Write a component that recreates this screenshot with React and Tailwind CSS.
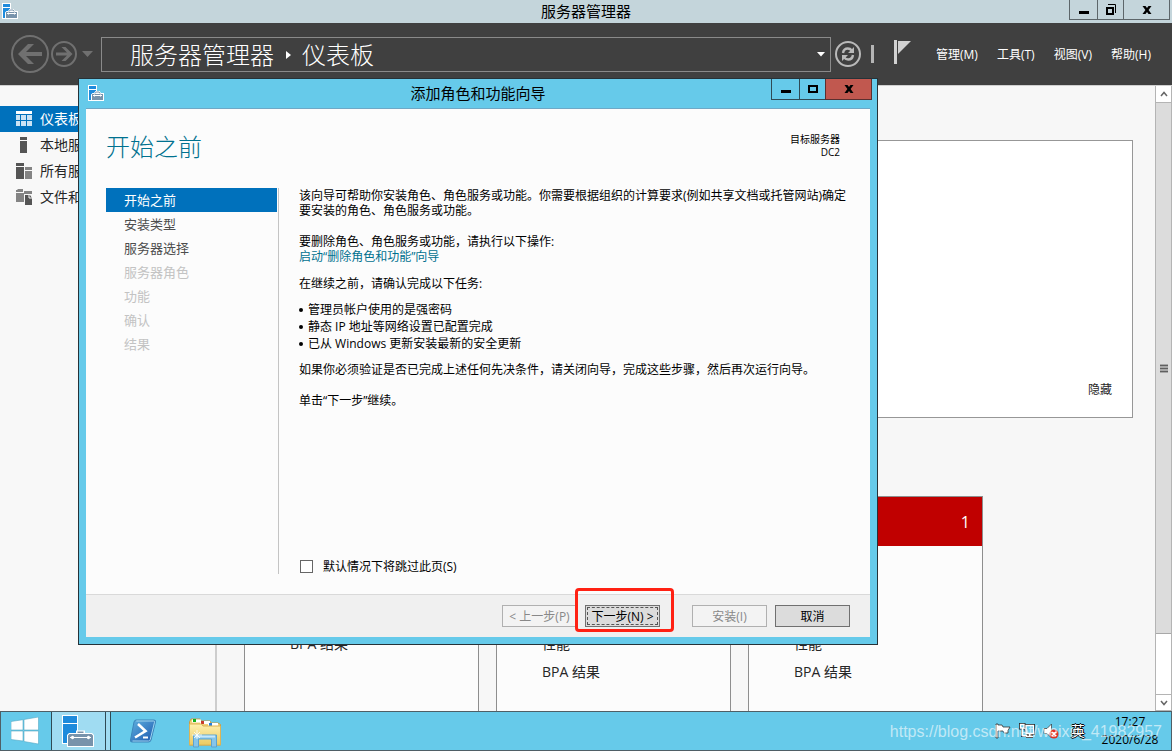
import React, { useState } from "react";

const steps = [
  { label: "开始之前", state: "active" },
  { label: "安装类型", state: "enabled" },
  { label: "服务器选择", state: "enabled" },
  { label: "服务器角色", state: "disabled" },
  { label: "功能", state: "disabled" },
  { label: "确认", state: "disabled" },
  { label: "结果", state: "disabled" },
];

const tasks = [
  "管理员帐户使用的是强密码",
  "静态 IP 地址等网络设置已配置完成",
  "已从 Windows 更新安装最新的安全更新",
];

const menus = ["管理(M)", "工具(T)", "视图(V)", "帮助(H)"];

const tiles = [
  { rows: ["BPA 结果"] },
  { rows: ["性能", "BPA 结果"] },
  { rows: ["性能", "BPA 结果"], count: 1 },
];

const ServerIcon = () => (
  <svg width="16" height="16" viewBox="0 0 16 16" className="shrink-0">
    <path d="M0 0h9v16H0z" fill="#fff" />
    <path d="M1 1h7v3H1zM1 5h7v10H1z" fill="#1e8bdc" />
    <path d="M3 9.5 4.500 8H6l1.500-2h4L13 8h3v8H3z" fill="#fff" />
    <path d="M4 9h11v6H4z" fill="#7893ab" />
    <path d="M7 8.500 8.200 7h2.800l1.200 1.500" fill="none" stroke="#7893ab" />
    <path d="M5 10.500h9M6.500 9.500v2M12.500 9.500v2" stroke="#fff" fill="none" />
  </svg>
);

const MinIcon = () => (
  <svg width="12" height="12" viewBox="0 0 12 12">
    <path d="M1 7h10v3H1z" fill="#000" />
  </svg>
);

const MaxIcon = () => (
  <svg width="12" height="12" viewBox="0 0 12 12">
    <path d="M2 3h8v6H2z" fill="none" stroke="#000" strokeWidth="2" />
  </svg>
);

const RestoreIcon = () => (
  <svg width="12" height="12" viewBox="0 0 12 12">
    <path d="M2 4h6v6H2z" fill="none" stroke="#000" strokeWidth="2" />
    <path d="M3 .500h7.500V9" fill="none" stroke="#000" />
  </svg>
);

const CloseIcon = () => (
  <svg width="12" height="12" viewBox="0 0 12 12">
    <path
      d="M1.500 2h3L6 4l1.500-2h3L7.600 6l2.900 4h-3L6 8l-1.500 2h-3l2.900-4z"
      fill="#000"
    />
  </svg>
);

const BackIcon = () => (
  <svg width="38" height="38" viewBox="0 0 38 38">
    <circle cx="19" cy="19" r="18" fill="none" stroke="#707070" strokeWidth="2" />
    <path d="M7 19 17 9h6l-8 8h16v4H15l8 8h-6z" fill="#707070" />
  </svg>
);

const ForwardIcon = () => (
  <svg width="26" height="26" viewBox="0 0 26 26">
    <circle cx="13" cy="13" r="12" fill="none" stroke="#707070" strokeWidth="2" />
    <path d="M21.500 13 14.500 6H10.500l5.500 5.500H5v3h11L10.500 20h4z" fill="#707070" />
  </svg>
);

const RefreshIcon = () => (
  <svg width="26" height="26" viewBox="0 0 26 26">
    <circle cx="13" cy="13" r="12" fill="none" stroke="#b9b9b9" strokeWidth="2" />
    <g fill="none" stroke="#b9b9b9" strokeWidth="2.400">
      <path d="M8 12c.5-3.200 2.600-4.500 4.800-4.500 1.800 0 3 .7 4 2" />
      <path d="M18 14c-.5 3.200-2.600 4.500-4.800 4.500-1.800 0-3-.7-4-2" />
    </g>
    <path d="M19 6v6h-6zM7 20v-6h6z" fill="#b9b9b9" />
  </svg>
);

const FlagIcon = () => (
  <svg width="18" height="24" viewBox="0 0 18 24">
    <path d="M0 0h3v24H0z" fill="#d2d2d2" />
    <path d="M4 1h13L7 11l-3 3z" fill="#d2d2d2" />
  </svg>
);

const DashboardIcon = () => (
  <svg width="16" height="16" viewBox="0 0 16 16">
    <path d="M0 0h16v3H0z" fill="#fff" />
    <path
      d="M0 4h4v5H0zM5 4h5v5H5zM11 4h5v5h-5zM0 10h4v5H0zM5 10h5v5H5zM11 10h5v5h-5z"
      fill="#cbe3f4"
    />
  </svg>
);

const LocalIcon = () => (
  <svg width="16" height="16" viewBox="0 0 16 16">
    <path d="M4 0h7v3H4zM4 4h7v12H4z" fill="#555" />
  </svg>
);

const AllIcon = () => (
  <svg width="16" height="16" viewBox="0 0 16 16">
    <path d="M0 0h8v3H0zM0 4h8v12H0z" fill="#555" />
    <path d="M9 4h7v3H9zM9 8h7v8H9z" fill="#848484" />
  </svg>
);

const FilesIcon = () => (
  <svg width="16" height="16" viewBox="0 0 16 16">
    <path d="M0 1h1l1-1h5v3H0zM0 4h8v9H0zM8 2h8v3H8z" fill="#848484" />
    <path d="M9 6h5l2 3v7H9z" fill="#555" />
    <path d="M13 6v3h3" fill="none" stroke="#f8f8f8" />
  </svg>
);

const sideItems = [
  { label: "仪表板", icon: <DashboardIcon />, active: true },
  { label: "本地服务器", icon: <LocalIcon /> },
  { label: "所有服务器", icon: <AllIcon /> },
  { label: "文件和存储服务", icon: <FilesIcon /> },
];

const Toolbar = () => (
  <header className="flex h-[62px] shrink-0 items-center bg-[#404040] pr-[21px] pl-[11px] text-white">
    <button aria-label="后退">
      <BackIcon />
    </button>
    <button aria-label="前进" className="ml-[2px]">
      <ForwardIcon />
    </button>
    <button aria-label="历史记录" className="ml-[5px] mr-2">
      <svg width="11" height="6" viewBox="0 0 11 6">
        <path d="M0 0h11L5.500 6z" fill="#707070" />
      </svg>
    </button>
    <div className="flex h-[35px] flex-1 items-center border border-[#8a8a8a] pt-px pr-[5px] pl-7 text-2xl font-light">
      <span>服务器管理器</span>
      <svg width="28" height="10" viewBox="0 0 28 10">
        <path d="M12 1v8l5-4z" fill="#fff" />
      </svg>
      <span>仪表板</span>
      <button aria-label="展开" className="ml-auto">
        <svg width="8" height="5" viewBox="0 0 8 5">
          <path d="M0 0h8L4 4.500z" fill="#fff" />
        </svg>
      </button>
    </div>
    <button aria-label="刷新" className="ml-1">
      <RefreshIcon />
    </button>
    <div className="ml-[10px] h-[18px] w-[3px] bg-[#b5b5b5]"></div>
    <button aria-label="通知" className="ml-5 mb-1">
      <FlagIcon />
    </button>
    <nav className="ml-6 flex w-[215px] justify-between pt-[2px] text-xs">
      {menus.map((m) => (
        <button key={m} className="whitespace-nowrap">
          {m}
        </button>
      ))}
    </nav>
  </header>
);

const Sidebar = () => (
  <nav className="w-[217px] shrink-0 border-r-2 border-[#cdcdcd] bg-[#f8f8f8] pt-5 text-sm">
    {sideItems.map((item) => (
      <a
        key={item.label}
        href="#"
        className={
          "flex h-[26px] items-center gap-2 pl-4 " +
          (item.active ? "bg-[#0071bc] text-white" : "text-[#262626]")
        }
      >
        {item.icon}
        {item.label}
      </a>
    ))}
  </nav>
);

const Scrollbar = () => (
  <div className="flex w-[17px] shrink-0 flex-col border-x border-[#b4b4b4] bg-white">
    <div className="flex h-[17px] items-center justify-center border-b border-[#b4b4b4]">
      <svg width="8" height="6" viewBox="0 0 8 6">
        <path d="M1 5l3-3.500L7 5" fill="none" stroke="#666" strokeWidth="1.500" />
      </svg>
    </div>
    <div className="flex grow-[531] basis-0 items-center justify-center border-b border-[#a8a8a8] bg-[#dcdcdc]">
      <svg width="8" height="9" viewBox="0 0 8 9">
        <path d="M0 0h8v9H0z" fill="#a8a8a8" />
        <path d="M0 1.500h8M0 4.500h8M0 7.500h8" stroke="#606060" />
      </svg>
    </div>
    <div className="grow-[60] basis-0"></div>
    <div className="flex h-[17px] items-center justify-center border-y border-[#b4b4b4]">
      <svg width="8" height="6" viewBox="0 0 8 6">
        <path d="M1 1l3 3.500L7 1" fill="none" stroke="#666" strokeWidth="1.500" />
      </svg>
    </div>
  </div>
);

const Dashboard = () => (
  <main className="min-w-0 flex-1 overflow-hidden bg-[#f7f7f7] pt-[54px] pr-[22px] pl-[27px] text-[#262626]">
    <section className="flex h-[278px] items-end justify-end border border-[#979797] bg-white px-5 pb-[19px]">
      <button className="text-xs">隐藏</button>
    </section>
    <div className="mt-[78px] flex gap-[17px]">
      {tiles.map((tile, i) => (
        <section
          key={i}
          className="h-[240px] w-[235px] shrink-0 border border-[#8e8e8e] bg-[#fcfcfc]"
        >
          <div
            className={
              "flex h-[49px] items-center justify-end pr-3 text-base text-white " +
              (tile.count ? "bg-[#c00000]" : "bg-[#fcfcfc]")
            }
          >
            {tile.count}
          </div>
          <ul className="pt-[84px] pl-[45px] text-sm">
            {tile.rows.map((r) => (
              <li key={r} className="h-7 leading-7">
                {r}
              </li>
            ))}
          </ul>
        </section>
      ))}
    </div>
  </main>
);

const Wizard = () => {
  const [skip, setSkip] = useState(false);

  return (
    <div
      role="dialog"
      aria-labelledby="wizard-title"
      className="absolute top-[78px] left-[78px] flex h-[567px] w-[800px] flex-col border border-[#263238] bg-[#66caea] px-[7px] pb-[7px] text-black"
    >
      <div className="grid h-[30px] shrink-0 grid-cols-[1fr_auto_1fr] border-b border-[#6fa8c6]">
        <div className="pt-[6px] pl-[2px]">
          <ServerIcon />
        </div>
        <h2 id="wizard-title" className="text-[15px] leading-7">
          添加角色和功能向导
        </h2>
        <div className="-mr-[2px] flex h-[21px] justify-end">
          <button
            aria-label="最小化"
            className="flex w-[29px] items-center justify-center border-x border-b border-[#2f4a55]"
          >
            <MinIcon />
          </button>
          <button
            aria-label="最大化"
            className="flex w-[25px] items-center justify-center border-b border-[#2f4a55]"
          >
            <MaxIcon />
          </button>
          <button
            aria-label="关闭"
            className="flex w-[47px] items-center justify-center border-x border-b border-[#5a3030] bg-[#c1584f]"
          >
            <CloseIcon />
          </button>
        </div>
      </div>

      <div className="flex flex-1 flex-col bg-[#fcfcfc]">
        <div className="flex h-[79px] items-start justify-between pt-6 pr-[30px] pl-5">
          <h1 className="text-2xl leading-7 font-light text-[#00718f]">
            开始之前
          </h1>
          <p className="text-right text-[10px] leading-[13px]">
            目标服务器
            <br />
            DC2
          </p>
        </div>

        <div className="flex flex-1 pb-5 pl-5">
          <ol className="w-[173px] shrink-0 border-r border-[#c4c4c4] pr-[1px] text-[13px]">
            {steps.map((s) => (
              <li
                key={s.label}
                className={
                  "h-6 pl-[18px] leading-6 " +
                  (s.state === "active"
                    ? "bg-[#0071bc] text-white"
                    : s.state === "enabled"
                      ? "text-[#4d4d4d]"
                      : "text-[#c3c3c3]")
                }
              >
                {s.label}
              </li>
            ))}
          </ol>
          <div className="flex flex-1 flex-col pr-5 pl-5 text-xs leading-[15px]">
            <p>
              该向导可帮助你安装角色、角色服务或功能。你需要根据组织的计算要求(例如共享文档或托管网站)确定要安装的角色、角色服务或功能。
            </p>
            <p className="mt-4">要删除角色、角色服务或功能，请执行以下操作:</p>
            <p>
              <a href="#" className="text-[#00718f]">
                启动“删除角色和功能”向导
              </a>
            </p>
            <p className="mt-3">在继续之前，请确认完成以下任务:</p>
            <ul className="mt-[10px] leading-[17px]">
              {tasks.map((t) => (
                <li key={t} className="flex items-center gap-[5px]">
                  <span className="size-1 rounded-full bg-black"></span>
                  {t}
                </li>
              ))}
            </ul>
            <p className="mt-[10px]">
              如果你必须验证是否已完成上述任何先决条件，请关闭向导，完成这些步骤，然后再次运行向导。
            </p>
            <p className="mt-4">单击“下一步”继续。</p>
            <label className="mt-auto flex items-center gap-[10px]">
              <input
                type="checkbox"
                checked={skip}
                onChange={(e) => setSkip(e.target.checked)}
                className="ml-px size-[13px] appearance-none border border-[#666] bg-white checked:bg-[#666]"
              />
              默认情况下将跳过此页(S)
            </label>
          </div>
        </div>

        <footer className="flex h-[43px] shrink-0 items-center justify-end border-t border-[#d9d9d9] bg-[#f0f0f0] pr-5 text-xs">
          <button
            disabled
            className="h-[22px] w-[75px] border border-[#b0b0b0] bg-[#f3f3f3] pt-px whitespace-nowrap text-[#888]"
          >
            &lt; 上一步(P)
          </button>
          <div className="relative ml-2">
            <button className="h-[22px] w-[75px] border border-[#707070] bg-[#dcdcdc] p-px">
              <span className="flex h-full items-center justify-center border border-dashed border-[#555] pt-px whitespace-nowrap">
                下一步(N) &gt;
              </span>
            </button>
            {/* highlight frame round the next button */}
            <div className="pointer-events-none absolute -top-[17px] -left-[10px] h-11 w-[99px] rounded border-3 border-[#ff2113]"></div>
          </div>
          <button
            disabled
            className="ml-8 h-[22px] w-[75px] border border-[#b0b0b0] bg-[#f3f3f3] pt-px text-[#888]"
          >
            安装(I)
          </button>
          <button className="ml-2 h-[22px] w-[75px] border border-[#707070] bg-[#dcdcdc] pt-px">
            取消
          </button>
        </footer>
      </div>
    </div>
  );
};

const StartIcon = () => (
  <svg width="28" height="28" viewBox="0 0 28 28">
    <path
      d="M0 4.500 12 2.700V13H0zM13 2.500 27.500 0v13H13zM0 14h12v10L0 22.500zM13 14h14.500v13L13 24.500z"
      fill="#fff"
      stroke="#58a9c4"
      strokeWidth=".6"
    />
  </svg>
);

const TaskServerIcon = () => (
  <svg width="33" height="33" viewBox="0 0 33 33">
    <path d="M0 0h16v29H0z" fill="#fff" />
    <path d="M1 1h14v7H1zM1 9h14v19H1z" fill="#1e8bdc" />
    <path d="M14 18v-2.500h9V18h7l2 2v12H5V20l2-2z" fill="#fff" />
    <path d="M15.500 18v-1.500h6V18zM7.500 19h22l1.500 1.500V31H6V20.500z" fill="#7893ab" />
    <path
      d="M8 22.500h21M11 21v3M26 21v3M8.500 22.500 11 21v3zM28.500 22.500 26 21v3z"
      stroke="#fff"
      strokeWidth="1"
      fill="#fff"
    />
  </svg>
);

const PowerShellIcon = () => (
  <svg width="28" height="24" viewBox="0 0 28 24">
    <defs>
      <linearGradient id="ps" x1="0" y1="0" x2="1" y2="1">
        <stop offset="0" stopColor="#5fb2e0" />
        <stop offset="1" stopColor="#1c55ad" />
      </linearGradient>
    </defs>
    <path
      d="M7 1h18q2 0 1.500 2L22 21q-.5 2-2.500 2H3q-2 0-1.500-2L5 3q.5-2 2-2z"
      fill="url(#ps)"
      stroke="#3c86bb"
    />
    <path
      d="M7.300 2h17.200q1.300 0 1 1.300L21.200 20.700q-.3 1.300-1.600 1.300H3.500"
      fill="none"
      stroke="#9fd6f0"
    />
    <path
      d="m9 5 7.500 7L6 18.500"
      fill="none"
      stroke="#fff"
      strokeWidth="2.600"
    />
    <path d="M14 18.500h5" stroke="#fff" strokeWidth="2" />
  </svg>
);

const ExplorerIcon = () => (
  <svg width="32" height="30" viewBox="0 0 32 30">
    <defs>
      <linearGradient id="folder" x1="0" y1="0" x2="0" y2="1">
        <stop offset="0" stopColor="#fdf0b0" />
        <stop offset="1" stopColor="#ecca62" />
      </linearGradient>
    </defs>
    <path
      d="M.5 27V4l1.500-3h9l1 2h9l1 2h7l2.500 1.500V27z"
      fill="#f0d27c"
      stroke="#c99c45"
    />
    <path d="M3 1.500h9v3H3z" fill="#fff" />
    <path d="M4 1h3v3H4z" fill="#12b31a" />
    <path d="M11 3h10v3H11z" fill="#fff" />
    <path d="M12 3h3v3h-3z" fill="#c83a2a" />
    <path d="M19 5h10v3H19z" fill="#fff" />
    <path d="M20 5h3v3h-3z" fill="#2380e0" />
    <path d="M.5 27V6h12l1.500 2h17.500v19z" fill="url(#folder)" stroke="#dcb456" />
    <path
      d="M4.500 29V17h23v12h-5v-8h-13v8z"
      fill="#86c5ea"
      stroke="#5ba3d0"
    />
    <path d="M6 18.500h20" stroke="#c8e8fa" strokeWidth="2" />
    <path d="M8 12v9M3 17h10M5 14l6 6M11 14l-6 6" stroke="#fff" strokeWidth=".8" />
  </svg>
);

const Tray = () => (
  <div className="ml-auto flex items-center gap-2">
    <svg width="16" height="16" viewBox="0 0 16 16">
      <path
        d="M1 1h2v1h4l1 2h7l-2 3.500V10H9L8 8H3v7H1z"
        fill="#fff"
        stroke="#333"
        strokeWidth=".8"
      />
    </svg>
    <svg width="16" height="16" viewBox="0 0 16 16">
      <path
        d="M7 2.500h7.500v8H7zM1.500 1.500h3.500v3.500H1.500zM3.500 5v7.500H8M7 13.500h7M10.500 11v2"
        fill="none"
        stroke="#222"
        strokeWidth="3"
      />
      <path
        d="M7 2.500h7.500v8H7zM1.500 1.500h3.500v3.500H1.500zM3.500 5v7.500H8M7 13.500h7M10.500 11v2"
        fill="#66caea"
        stroke="#fff"
        strokeWidth="1.400"
      />
    </svg>
    <svg width="16" height="16" viewBox="0 0 16 16">
      <path
        d="M1 5.500h3L8.500 1v14L4 10.500H1z"
        fill="#fff"
        stroke="#333"
        strokeWidth=".7"
      />
      <circle cx="11" cy="11" r="4.500" fill="#e03126" />
      <path d="m9 9 4 4M13 9l-4 4" stroke="#fff" strokeWidth="1.500" />
    </svg>
    <span className="ml-1 text-sm text-white [text-shadow:1px_0_#000,-1px_0_#000,0_1px_#000,0_-1px_#000]">
      英
    </span>
    <div className="mr-2 ml-1 w-[66px] text-center text-xs leading-[18px] text-black">
      17:27
      <br />
      2020/6/28
    </div>
  </div>
);

const Taskbar = () => (
  <footer className="relative flex h-10 shrink-0 items-stretch border border-[#4f5f66] bg-[#66caea]">
    <button aria-label="开始" className="flex w-[50px] items-center pl-[10px]">
      <StartIcon />
    </button>
    <button
      aria-label="服务器管理器"
      className="flex w-[55px] items-center border-x border-[#2f4a55] bg-[#a0dcf2] pl-[10px]"
    >
      <TaskServerIcon />
    </button>
    <div className="w-[5px] border-r border-[#2f4a55] bg-[#a0dcf2]"></div>
    <button aria-label="PowerShell" className="ml-[18px] flex items-center">
      <PowerShellIcon />
    </button>
    <button aria-label="文件资源管理器" className="ml-8 flex items-center pt-1">
      <ExplorerIcon />
    </button>
    <Tray />
    <span className="pointer-events-none absolute right-[9px] bottom-[6px] font-['Liberation_Sans'] text-base leading-6 text-white/60">
      https://blog.csdn.net/weixin_41982957
    </span>
  </footer>
);

const App = () => {
  return (
    <div className="relative flex h-screen flex-col overflow-hidden bg-[#f7f7f7] font-['Open_Sans','Noto_Sans_CJK_SC',sans-serif]">
      <div className="grid h-[23px] shrink-0 grid-cols-[1fr_auto_1fr] bg-[#c4d5db] pr-[2px] pl-[2px] text-black">
        <div className="pt-[3px]">
          <ServerIcon />
        </div>
        <h1 className="text-[15px] leading-[23px]">服务器管理器</h1>
        <div className="flex h-5 justify-end">
          <button
            aria-label="最小化"
            className="flex w-[29px] items-center justify-center border-x border-b border-[#5d666a]"
          >
            <MinIcon />
          </button>
          <button
            aria-label="还原"
            className="flex w-[25px] items-center justify-center border-b border-[#5d666a]"
          >
            <RestoreIcon />
          </button>
          <button
            aria-label="关闭"
            className="flex w-[47px] items-center justify-center border-x border-b border-[#5d666a]"
          >
            <CloseIcon />
          </button>
        </div>
      </div>
      <Toolbar />
      <div className="flex min-h-0 flex-1 border-t border-[#d0d0d0]">
        <Sidebar />
        <Dashboard />
        <Scrollbar />
      </div>
      <Taskbar />
      <Wizard />
    </div>
  );
};

export default App;
